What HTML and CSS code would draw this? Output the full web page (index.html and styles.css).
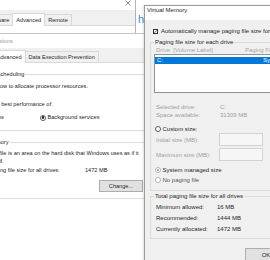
FILE: index.html
```html
<!DOCTYPE html>
<html lang="en">
<head>
  <meta charset="UTF-8">
  <title>Virtual Memory</title>
  <link rel="stylesheet" href="styles.css">
</head>
<body>
<div class="desk">
  <span class="behind-link">h</span>

  <!-- System Properties (back) -->
  <div class="win sys">
    <div class="titlebar sys-title">
      <span class="close">
        <svg width="6" height="6" viewBox="0 0 6 6"><path d="M0.5 0.5 L5.5 5.5 M5.5 0.5 L0.5 5.5" stroke="#444" stroke-width="0.6"/></svg>
      </span>
    </div>
    <div class="tabs">
      <div class="tab">Computer Name</div>
      <div class="tab">Hardware</div>
      <div class="tab active">Advanced</div>
      <div class="tab">Remote</div>
    </div>
    <div class="tab-panel sys-panel"></div>
  </div>

  <!-- Performance Options -->
  <div class="win perf">
    <div class="titlebar inactive">Performance Options</div>
    <div class="tabs">
      <div class="tab">Visual Effects</div>
      <div class="tab active">Advanced</div>
      <div class="tab">Data Execution Prevention</div>
    </div>
    <div class="tab-panel perf-panel">
      <fieldset class="group sched">
        <legend>Processor scheduling</legend>
        <div class="line l1">Choose how to allocate processor resources.</div>
        <div class="line l2">Adjust for best performance of:</div>
        <div class="line choices">
          <span class="opt"><span class="radio"></span>Programs</span>
          <span class="opt"><span class="radio on"></span>Background services</span>
        </div>
      </fieldset>
      <fieldset class="group vmem">
        <legend>Virtual memory</legend>
        <div class="para">A paging file is an area on the hard disk that Windows uses as if it<br>were RAM.</div>
        <div class="kv total">
          <span class="k">Total paging file size for all drives:</span>
          <span>1472 MB</span>
        </div>
        <button class="btn change">Change...</button>
      </fieldset>
    </div>
  </div>

  <!-- Virtual Memory (front) -->
  <div class="win vm">
    <div class="titlebar vm-title">Virtual Memory</div>
    <div class="check-row">
      <span class="check">
        <svg width="5" height="5" viewBox="0 0 5 5"><path d="M0.9 2.6 L2 3.7 L4.2 1.1" fill="none" stroke="#222" stroke-width="0.7"/></svg>
      </span>
      Automatically manage paging file size for all drives
    </div>

    <fieldset class="group each">
      <legend>Paging file size for each drive</legend>
      <div class="cols head"><span class="c1">Drive&nbsp; [Volume Label]</span><span>Paging File Size (MB)</span></div>
      <div class="listbox">
        <div class="cols sel"><span class="c1">C:</span><span>System managed</span></div>
      </div>
      <div class="kv dim first"><span class="k">Selected drive:</span><span>C:</span></div>
      <div class="kv dim"><span class="k">Space available:</span><span>31309 MB</span></div>
      <div class="line custom"><span class="radio"></span>Custom size:</div>
      <div class="field"><span class="k">Initial size (MB):</span><span class="input"></span></div>
      <div class="field max"><span class="k">Maximum size (MB):</span><span class="input"></span></div>
      <div class="line sysman"><span class="radio on dis"></span>System managed size</div>
      <div class="line nopage"><span class="radio dis"></span>No paging file</div>
    </fieldset>

    <fieldset class="group all">
      <legend>Total paging file size for all drives</legend>
      <div class="kv row"><span class="k">Minimum allowed:</span><span>16 MB</span></div>
      <div class="kv row"><span class="k">Recommended:</span><span>1444 MB</span></div>
      <div class="kv row"><span class="k">Currently allocated:</span><span>1472 MB</span></div>
    </fieldset>

    <button class="btn ok">OK</button>
  </div>
</div>
</body>
</html>
```

FILE: styles.css
```css
body {
  margin: 0;
  font-family: "Liberation Sans", Arial, sans-serif;
  font-size: 5.6px;
  color: #262626;
  background: #fff;
}
.desk {
  position: relative;
  width: 270px;
  height: 260px;
  overflow: hidden;
}
.behind-link {
  position: absolute;
  left: 138px;
  top: 13px;
  font-size: 11px;
  line-height: 12px;
  color: #3a8ad8;
}

/* windows */
.win {
  position: absolute;
  box-sizing: border-box;
  background: #f0f0f0;
}
.titlebar {
  height: 14px;
  line-height: 14px;
  background: #fff;
  white-space: nowrap;
}
.titlebar.inactive {
  color: #9a9a9a;
  padding-left: 13px;
}

.sys {
  left: -72px;
  top: -4px;
  width: 208px;
  height: 40px;
  border-right: 1px solid #b4b4b4;
}
.sys-title {
  display: flex;
  justify-content: flex-end;
}
.close {
  width: 14px;
  display: flex;
  align-items: center;
  justify-content: center;
}
.sys-panel {
  box-sizing: border-box;
  height: 9px;
  border-bottom: 1px dotted #cfcfcf;
}

.perf {
  left: -53px;
  top: 33px;
  width: 200px;
  height: 240px;
  border-top: 1px solid #c6c6c6;
}

/* tabs */
.tabs {
  display: flex;
  align-items: flex-end;
  height: 13px;
  padding-left: 5px;
}
.sys .tabs { margin-top: 2px; }
.perf .tabs { margin-top: 1px; }
.tab {
  height: 11px;
  line-height: 10px;
  box-sizing: border-box;
  padding: 0 3px;
  border: 1px solid #d9d9d9;
  border-bottom: none;
  margin-right: -1px;
  background: #f0f0f0;
  white-space: nowrap;
  flex: none;
}
.tab.active {
  height: 13px;
  line-height: 12px;
  background: #fff;
  margin-bottom: -1px;
  position: relative;
  z-index: 1;
}
.tab-panel {
  background: #fff;
  border-top: 1px solid #d9d9d9;
}
.perf-panel {
  margin: 0 3px;
  border-left: 1px solid #d9d9d9;
  height: 200px;
}

/* group boxes */
.group {
  margin: 0;
  padding: 0;
  border: 1px solid #dcdcdc;
  border-right: none;
  min-width: 0;
}
.group legend {
  padding: 0 1px;
  line-height: 8px;
  white-space: nowrap;
}
.line {
  line-height: 8px;
  white-space: nowrap;
}
.kv {
  display: flex;
  line-height: 8px;
  white-space: nowrap;
}
.kv .k,
.field .k,
.cols .c1 {
  flex: none;
}

.sched {
  margin: 7px 0 0 16px;
  padding: 0 0 8px 8px;
}
.perf .group legend { margin-left: -6px; }
.sched .line { line-height: 9px; }
.sched .l1 { margin-top: 4px; }
.sched .l2 { margin-top: 9px; }
.choices {
  margin-top: 4px;
  display: grid;
  grid-template-columns: 68px auto;
  margin-left: -4px;
}
.opt {
  display: flex;
  align-items: center;
}
.vmem {
  margin: 7px 0 0 16px;
  padding: 0 0 6px 8px;
}
.para {
  margin-top: 3px;
  line-height: 8px;
  white-space: nowrap;
}
.total { margin-top: 1px; }
.total .k { width: 109px; }
.btn {
  display: block;
  box-sizing: border-box;
  font: inherit;
  color: #262626;
  background: #e1e1e1;
  border: 1px solid #adadad;
  padding: 0;
  text-align: center;
}
.change {
  margin: 6px 0 0 123px;
  width: 44px;
  height: 12px;
}

/* radios and checkbox */
.radio {
  width: 6px;
  height: 6px;
  box-sizing: border-box;
  border: 0.5px solid #5a5a5a;
  border-radius: 50%;
  background: #fff;
  display: inline-flex;
  align-items: center;
  justify-content: center;
  margin-right: 1.5px;
  flex: none;
}
.radio.on::after {
  content: "";
  width: 2.6px;
  height: 2.6px;
  border-radius: 50%;
  background: #222;
}
.radio.dis { border-color: #b4b4b4; }
.radio.dis.on::after { background: #9a9a9a; }

.check {
  width: 5px;
  height: 5px;
  box-sizing: border-box;
  border: 0.7px solid #333;
  background: #fff;
  display: inline-flex;
  margin-right: 3px;
  flex: none;
}
.check svg { margin: -0.7px; }

/* virtual memory dialog */
.vm {
  left: 144px;
  top: 5px;
  width: 140px;
  height: 270px;
  font-size: 6px;
  border-left: 1px solid #9c9c9c;
  border-top: 1px solid #9c9c9c;
  box-shadow: -1px 0 2px rgba(0, 0, 0, 0.12);
}
.vm-title {
  height: 14px;
  line-height: 9px;
  padding-left: 2px;
}
.check-row {
  display: flex;
  align-items: center;
  height: 8px;
  margin-top: 7px;
  padding-left: 8px;
  white-space: nowrap;
}
.vm .group { margin-left: 5px; }
.vm .group legend { margin-left: -2px; }
.each {
  margin-top: 3px;
  padding: 0 0 6px 5px;
}
.cols {
  display: flex;
  white-space: nowrap;
}
.head {
  line-height: 8px;
  color: #a6a6a6;
}
.head .c1 { width: 89px; }
.listbox {
  margin-left: -2px;
  height: 39px;
  box-sizing: border-box;
  border: 1px solid #8f9399;
  background: #fff;
  padding-top: 2px;
}
.sel {
  height: 7px;
  line-height: 7px;
  padding-left: 2px;
  background: #0078d7;
  color: #fff;
}
.sel .c1 { width: 106px; }
.dim { color: #a0a0a0; }
.dim .k { width: 64px; }
.dim.first { margin-top: 10px; }
.custom {
  margin-top: 6px;
  display: flex;
  align-items: center;
  margin-left: -1px;
}
.field {
  display: flex;
  align-items: center;
  height: 13px;
  color: #a0a0a0;
  white-space: nowrap;
}
.field .k { width: 63px; }
.field.max { margin-top: 2px; }
.input {
  width: 44px;
  height: 13px;
  box-sizing: border-box;
  border: 1px solid #d3d3d3;
  background: #f6f6f6;
  flex: none;
}
.sysman {
  margin-top: 5px;
  display: flex;
  align-items: center;
  margin-left: -1px;
}
.nopage {
  margin-top: 2px;
  display: flex;
  align-items: center;
  margin-left: -1px;
  color: #555;
}
.all {
  margin-top: 1px;
  padding: 0 0 3px 5px;
}
.row { line-height: 11px; }
.all .row:first-of-type { margin-top: 2px; }
.row .k { width: 61px; }
.ok {
  margin: 9px 0 0 100px;
  width: 42px;
  height: 14px;
}
```
